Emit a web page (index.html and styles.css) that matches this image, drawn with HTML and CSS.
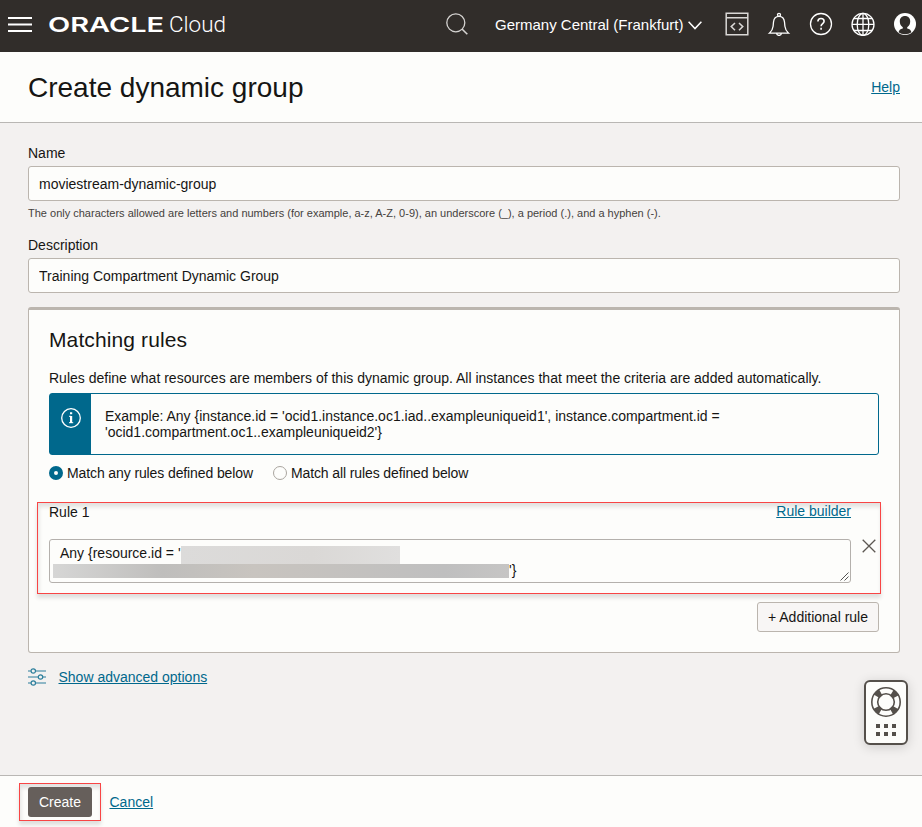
FILE: index.html
```html
<!DOCTYPE html>
<html lang="en">
<head>
<meta charset="utf-8">
<title>Create dynamic group</title>
<link rel="stylesheet" href="styles.css">
</head>
<body>
<header class="topbar">
  <svg class="menu" width="24" height="15" viewBox="0 0 24 15"><path d="M0 1h24M0 7.5h24M0 14h24" stroke="#fff" stroke-width="2"/></svg>
  <svg class="brand" width="178" height="24" viewBox="0 0 178 24">
    <text class="brand-oracle" x="0" y="19" textLength="116" lengthAdjust="spacingAndGlyphs">ORACLE</text>
    <text class="brand-cloud" x="121" y="19" textLength="57" lengthAdjust="spacingAndGlyphs">Cloud</text>
  </svg>
  <svg class="search" width="22" height="22" viewBox="0 0 22 22" fill="none" stroke="#d5d3d1" stroke-width="1.3"><circle cx="9.8" cy="9.8" r="9"/><path d="M16 16l5.300 5.300" stroke-width="1.600"/></svg>
  <span class="region">Germany Central (Frankfurt)</span>
  <svg class="chev" width="14" height="9" viewBox="0 0 14 9" fill="none" stroke="#fff" stroke-width="1.500"><path d="M.6.8L7 7.600 13.400.8"/></svg>
  <nav class="tools">
    <svg width="24" height="24" viewBox="0 0 24 24" fill="none" stroke="#dad8d6" stroke-width="1.500"><path d="M1.200 1.200h21.600v21.600H1.200zM1.200 5.800h21.600M10 11l-3.800 3.600 3.800 3.600M14 11l3.800 3.600-3.800 3.600"/></svg>
    <svg width="24" height="24" viewBox="0 0 24 24" fill="none" stroke="#fff" stroke-width="1.300"><circle cx="12" cy="2.800" r="1.500"/><path d="M2.400 21.200c2.600-2.300 3.400-4 3.700-7l.4-4.200c.4-3.700 2.500-5.700 5.500-5.700s5.100 2 5.500 5.700l.4 4.200c.3 3 1.100 4.700 3.700 7zM9.600 21.300a2.400 2.100 0 0 0 4.800 0"/></svg>
    <svg width="24" height="24" viewBox="0 0 24 24" fill="none" stroke="#fff" stroke-width="1.300"><circle cx="12" cy="12" r="10.500"/><path d="M8.900 9.500c0-1.900 1.300-3 3.100-3s3.100 1.100 3.100 2.800c0 2.300-3 2.300-3 4.900M12.100 15.700v2" stroke-width="1.600"/></svg>
    <svg width="24" height="24" viewBox="0 0 24 24" fill="none" stroke="#fff" stroke-width="1.300"><circle cx="12" cy="12.400" r="11"/><ellipse cx="12" cy="12.400" rx="5.800" ry="11"/><path d="M12 1.400v22M1 12.400h22M3 6.500h18M3 18.500h18"/></svg>
    <svg width="24" height="24" viewBox="0 0 24 24"><circle cx="12" cy="12" r="11" fill="#fff"/><path d="M5.600 20.200c.4-2 1.600-3 4.200-3.700v-1.200C7.600 13.800 6.800 12 6.800 9.300 6.800 6.100 8.800 4 12 4s5.200 2.100 5.200 5.300c0 2.700-.8 4.500-3 6v1.200c2.600.7 3.800 1.700 4.200 3.700C15.500 22.800 8.500 22.800 5.600 20.200z" fill="#312d2a"/></svg>
  </nav>
</header>
<section class="titlebar">
  <h1>Create dynamic group</h1>
  <a href="#">Help</a>
</section>
<main>
  <label for="name">Name</label>
  <input id="name" type="text" value="moviestream-dynamic-group">
  <p class="hint">The only characters allowed are letters and numbers (for example, a-z, A-Z, 0-9), an underscore (_), a period (.), and a hyphen (-).</p>
  <label for="desc">Description</label>
  <input id="desc" type="text" value="Training Compartment Dynamic Group">
  <section class="panel">
    <h2>Matching rules</h2>
    <p class="intro">Rules define what resources are members of this dynamic group. All instances that meet the criteria are added automatically.</p>
    <div class="info">
      <div class="info-icon"><svg width="20" height="20" viewBox="0 0 20 20"><circle cx="10" cy="10" r="9.300" fill="none" stroke="#fff" stroke-width="1.300"/><path d="M8 8.300H10v6M8 14.700h4.200" fill="none" stroke="#fff" stroke-width="1"/><path d="M9 4.300h2.200v2H9zM9 8h2.200v7H9z" fill="#fff"/></svg></div>
      <p>Example: Any {instance.id = 'ocid1.instance.oc1.iad..exampleuniqueid1', instance.compartment.id = 'ocid1.compartment.oc1..exampleuniqueid2'}</p>
    </div>
    <div class="choices">
      <span class="choice"><i class="radio on"></i>Match any rules defined below</span>
      <span class="choice"><i class="radio"></i>Match all rules defined below</span>
    </div>
    <div class="rule">
      <div class="mark mark-rule"></div>
      <div class="rule-head"><span>Rule 1</span><a href="#">Rule builder</a></div>
      <div class="rule-row">
        <div class="area">
          <div class="line first">Any {resource.id = '<i class="mask mask-a"></i></div>
          <div class="line"><i class="mask mask-b"></i>'}</div>
          <svg class="grip" width="9" height="9" viewBox="0 0 9 9"><path d="M.5 8.500l8-8M4.500 8.500l4-4" stroke="#555" stroke-width="1"/></svg>
        </div>
        <svg class="close" width="14" height="14" viewBox="0 0 14 14"><path d="M.7.7l12.600 12.600M13.300.7L.7 13.300" stroke="#5c5752" stroke-width="1.300"/></svg>
      </div>
    </div>
    <button class="add">+ Additional rule</button>
  </section>
  <div class="advanced">
    <svg width="18" height="18" viewBox="0 0 18 18" fill="none" stroke="#2d7f9c" stroke-width="1.200"><path d="M0 3h3M7.600 3H18M0 9h10M15 9h3M0 15h3M7.600 15H18"/><circle cx="5.300" cy="3" r="2.200"/><circle cx="12.500" cy="9" r="2.200"/><circle cx="5.300" cy="15" r="2.200"/></svg>
    <a href="#">Show advanced options</a>
  </div>
</main>
<footer>
  <div class="create-wrap"><div class="mark mark-create"></div><button class="create">Create</button></div>
  <a href="#">Cancel</a>
</footer>
<aside class="support">
  <svg width="30" height="30" viewBox="0 0 30 30" fill="none" stroke="#55504b"><circle cx="15" cy="15" r="11" stroke-width="7" stroke-dasharray="5.600 11.679" stroke-dashoffset="-5.840"/><circle cx="15" cy="15" r="14.200" stroke-width="1.600"/><circle cx="15" cy="15" r="8.300" stroke-width="1.600"/></svg>
  <svg width="20" height="12" viewBox="0 0 20 12" fill="#55504b"><path d="M0 0h4v4H0zM8 0h4v4H8zM16 0h4v4h-4zM0 8h4v4H0zM8 8h4v4H8zM16 8h4v4h-4z"/></svg>
</aside>
</body>
</html>
```
FILE: styles.css
```css
* { box-sizing: border-box; }
body {
  margin: 0;
  height: 827px;
  display: flex;
  flex-direction: column;
  overflow: hidden;
  background: #f3f1f0;
  color: #161513;
  font: 14px/16px "Liberation Sans", Arial, sans-serif;
}
h1, h2, p { margin: 0; font-weight: 400; }
a { color: #00688c; text-decoration: underline; }
svg { display: block; flex: none; }

.topbar { height: 52px; flex: none; display: flex; align-items: center; padding-left: 8px; background: #312d2a; color: #fff; }
.menu { margin-top: -4px; }
.brand { margin: -2px 0 0 16px; fill: #fff; }
.brand-oracle { font: 600 20.500px Inter, sans-serif; }
.brand-cloud { font: 300 22px Roboto, sans-serif; }
.search { margin: -4px 0 0 220px; }
.region { width: 189px; margin: -3px 0 0 27px; white-space: nowrap; font-size: 15px; }
.chev { margin: -1px 0 0 4px; }
.tools { display: flex; gap: 18px; margin: -4px 0 0 23px; }

.titlebar { height: 71px; flex: none; display: flex; align-items: center; justify-content: space-between; padding: 0 22px 0 28px; background: #fdfdfb; border-bottom: 1px solid #b9b7b4; }
h1 { padding-top: 2px; font-size: 28px; line-height: 34px; }

main { flex: 1; padding: 22px 22px 0 28px; }
label { display: block; margin-bottom: 5px; }
input { display: block; width: 100%; height: 35px; padding: 0 10px; background: #fdfdfb; border: 1px solid #bbb5ae; border-radius: 3px; font: inherit; color: inherit; }
.hint { margin: 6px 0 18px; font-size: 11px; line-height: 12px; color: #45413d; }

.panel { margin-top: 14px; height: 346px; padding: 18px 20px 0; background: #fdfdfb; border: 1px solid #bbb5ae; border-top-width: 3px; border-radius: 3px; }
h2 { font-size: 21px; line-height: 24px; letter-spacing: .12px; }
.intro { margin: 18px 0 7px; white-space: nowrap; }
.info { display: flex; height: 62px; border: 1px solid #00688c; border-radius: 3px; }
.info-icon { flex: none; width: 41px; padding: 14px 0 0 11px; background: #00688c; }
.info p { padding: 14px; }
.choices { display: flex; gap: 20px; margin-top: 10px; }
.choice { display: flex; align-items: center; gap: 4px; white-space: nowrap; letter-spacing: -.11px; }
.radio { width: 14px; height: 14px; border: 1px solid #aaa59f; border-radius: 50%; }
.radio.on { border: 5px solid #00688c; }

.rule { position: relative; margin-top: 22px; }
.rule-head { position: relative; display: flex; justify-content: space-between; padding-right: 28px; }
.rule-head span { padding-top: 1px; }
.rule-row { display: flex; margin-top: 19px; gap: 11px; }
.area { position: relative; width: 802px; height: 44px; padding: 5px 3px; border: 1px solid #b4b0ac; border-radius: 3px; }
.line { display: flex; height: 17px; line-height: 17px; white-space: pre; }
.first { padding-left: 7px; }
.mask { flex: none; }
.mask-a { width: 219px; height: 18px; margin-top: 1px; background: linear-gradient(90deg, #dcdbda, #dad8d6 60%, #e0dfde); }
.mask-b { width: 456px; height: 14px; margin-top: 2px; background: linear-gradient(90deg, #d6d6d5, #bfbebc 24%, #c8c4bf 44%, #bfbfbf 86%, #c6c5c4); }
.grip { position: absolute; right: 1px; bottom: 1px; }
.mark { position: absolute; border: 1px solid #f84545; box-shadow: 0 4px 4px rgba(0,0,0,.12), inset 1px 4px 4px rgba(0,0,0,.11); pointer-events: none; }
.mark-rule { left: -12px; top: -1px; width: 844px; height: 92px; }
.add { display: block; margin: 19px 0 0 auto; width: 122px; height: 30px; padding: 0; background: #f8f6f5; border: 1px solid #bbb5ae; border-radius: 3px; font: inherit; color: inherit; }
.advanced { display: flex; align-items: center; gap: 12.500px; margin-top: 15px; }

footer { flex: none; height: 52px; display: flex; align-items: center; gap: 17.500px; padding-left: 28px; background: #fdfdfb; border-top: 1px solid #b9b7b4; }
.create-wrap { position: relative; }
.create { position: relative; display: block; width: 64px; height: 30px; padding: 0; background: #665f5b; border: 0; border-radius: 3px; color: #fff; font: inherit; }
.mark-create { left: -9px; top: -4px; width: 82px; height: 38px; }

.support { position: absolute; left: 864px; top: 680px; width: 44px; height: 65px; display: flex; flex-direction: column; align-items: center; gap: 7px; padding-top: 5px; background: #fdfdfb; border: 2px solid #55504b; border-radius: 6px; box-shadow: 0 2px 12px rgba(0,0,0,.16); }
```
